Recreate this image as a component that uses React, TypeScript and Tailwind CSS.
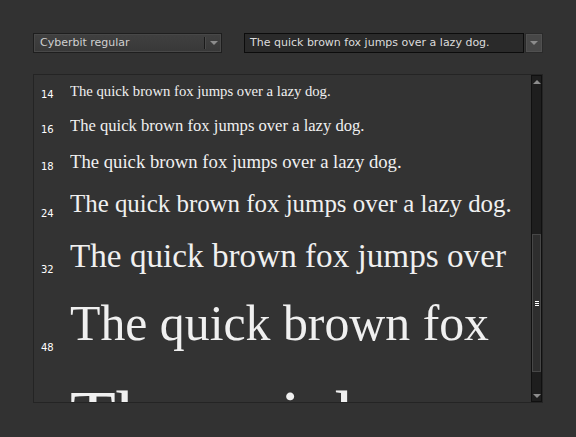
import React from 'react';

// font sample sheet: one row per size, label at the row's bottom edge
const ROWS: { n: number; cls: string }[] = [
  { n: 14, cls: 'pt-[8px] text-[14.7px]' },
  { n: 16, cls: 'pt-[16px] text-[16.6px]' },
  { n: 18, cls: 'pt-[16px] text-[18.7px]' },
  { n: 24, cls: 'pt-[18px] text-[24.9px]' },
  { n: 32, cls: 'pt-[18px] text-[33.2px]' },
  { n: 48, cls: 'pt-[20px] text-[49.8px]' },
  { n: 72, cls: 'pt-[21px] text-[75px]' },
];

const SAMPLE = 'The quick brown fox jumps over a lazy dog.';
const UI = '"DejaVu Sans", Verdana, sans-serif';

function Arrow({ up = false }: { up?: boolean }) {
  return (
    <svg width="8" height="4" viewBox="0 0 8 4" className="block">
      <path d={up ? 'M0 4 L4 0 L8 4 Z' : 'M0 0 L8 0 L4 4 Z'} fill="#8c8c8c" />
    </svg>
  );
}

export default function App() {
  return (
    <div className="h-[437px] w-[576px] overflow-hidden bg-[#323232] px-[33px] pt-[33px]" style={{ fontFamily: UI }}>
      <div className="flex h-[20px] items-stretch gap-[22px]">
        <div className="flex w-[189px] border border-[#1e1e1e] bg-gradient-to-b from-[#404040] to-[#383838] shadow-[inset_0_0_0_1px_#484848]">
          <div className="flex flex-1 items-center pl-[6px] text-[11px] text-[#d0d0d0]">Cyberbit regular</div>
          <div className="my-[3px] w-[2px] border-l border-[#1a1a1a] bg-[#4a4a4a]" />
          <div className="flex w-[15px] items-center justify-center">
            <Arrow />
          </div>
        </div>
        <div className="flex flex-1">
          <div className="flex flex-1 items-center border border-[#0c0c0c] bg-[#2a2a2a] pl-[5px] text-[11px] text-[#dcdcdc]">
            {SAMPLE}
          </div>
          <div className="ml-px flex w-[18px] items-center justify-center border border-[#2a2a2a] bg-[#474747] shadow-[inset_0_0_0_1px_#505050]">
            <Arrow />
          </div>
        </div>
      </div>

      <div className="mt-[21px] flex h-[329px] w-[510px] border border-[#242424] bg-[#333333]">
        <div className="flex-1 overflow-hidden">
          {ROWS.map((r) => (
            <div key={r.n} className={`flex items-end pr-[5px] ${r.cls}`}>
              <span className="w-[36px] shrink-0 pl-[7px] text-[10px] leading-none text-white" style={{ fontFamily: UI }}>
                {r.n}
              </span>
              <div
                className="h-[1.15em] min-w-0 flex-1 overflow-hidden leading-[1.15] text-[#f0f0f0]"
                style={{ fontFamily: '"Liberation Serif", "Times New Roman", serif' }}
              >
                {SAMPLE}
              </div>
            </div>
          ))}
        </div>
        <div className="flex w-[11px] flex-col border border-[#101010] bg-[#1e1e1e]">
          <div className="flex h-[11px] items-center justify-center">
            <Arrow up />
          </div>
          <div className="flex flex-1 flex-col justify-end py-[2px]">
            <div className="mb-[16px] flex h-[138px] items-center justify-center border border-[#474747] bg-[#2e2e2e]">
              <div className="flex flex-col gap-px">
                <div className="h-px w-[4px] bg-white" />
                <div className="h-px w-[4px] bg-white" />
                <div className="h-px w-[4px] bg-white" />
              </div>
            </div>
          </div>
          <div className="flex h-[11px] items-center justify-center">
            <Arrow />
          </div>
        </div>
      </div>
    </div>
  );
}
